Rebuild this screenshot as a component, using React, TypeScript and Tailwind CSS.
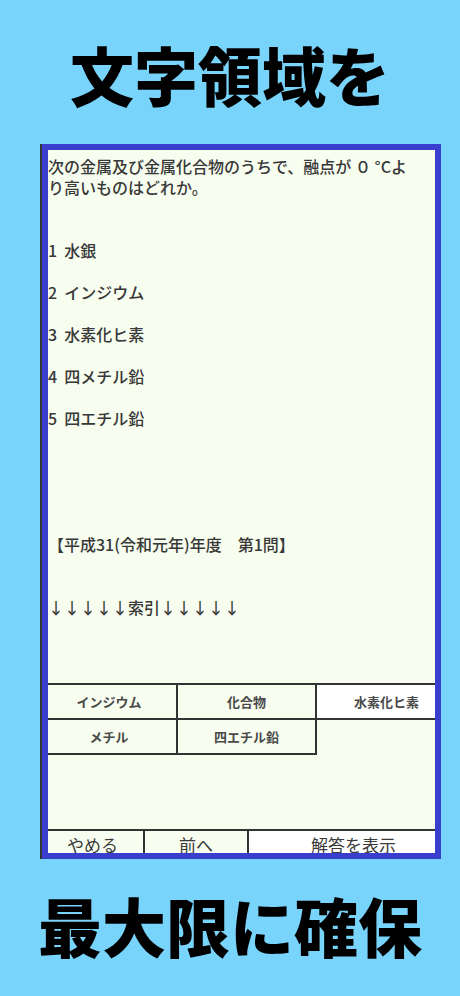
import React from "react";

const jp = { fontFamily: '"Noto Sans CJK JP", "Noto Sans", sans-serif' };

const lines = [
    "次の金属及び金属化合物のうちで、融点が ０ °Cよ",
    "り高いものはどれか。",
    "",
    "",
    "1  水銀",
    "",
    "2  インジウム",
    "",
    "3  水素化ヒ素",
    "",
    "4  四メチル鉛",
    "",
    "5  四エチル鉛",
    "",
    "",
    "",
    "",
    "",
    "【平成31(令和元年)年度　第1問】",
    "",
    "",
    "↓↓↓↓↓索引↓↓↓↓↓",
];

const keywords = ["インジウム", "化合物", "水素化ヒ素", "メチル", "四エチル鉛"];

export default function App() {
    return (
        <div className="w-[460px] h-[996px] bg-[#79d4fc] flex flex-col overflow-hidden" style={jp}>
            {/* Top heading */}
            <div className="h-[144px] flex items-center justify-center pt-[2px]">
                <h1 className="text-[64px] leading-none font-black text-black">文字領域を</h1>
            </div>

            {/* Phone screen */}
            <div className="ml-[40px] w-[401px] h-[715px] border-l-2 border-[#333] relative overflow-hidden">
                <div className="w-[416px] h-full bg-[#f7fdef] flex flex-col">
                    {/* Question */}
                    <p className="pt-[12px] pl-[6px] h-[474px] text-[16px] leading-[21px] text-[#383838] font-medium whitespace-pre">
                        {lines.join("\n")}
                    </p>

                    {/* Keyword buttons */}
                    <div className="mt-[65px] grid grid-cols-[136px_139px_141px] border-t-2 border-[#333]">
                        {keywords.map((k, i) => (
                            <div
                                key={k}
                                className={`h-[35px] flex items-center justify-center border-r-2 border-b-2 border-[#333] text-[13px] font-bold text-[#4a4a4a] ${i === 2 ? 'bg-white' : 'bg-[#f7fdef]'}`}
                            >
                                {k}
                            </div>
                        ))}
                    </div>

                    {/* Bottom bar */}
                    <div className="mt-[74px] flex border-t-2 border-[#333] h-[40px] text-[17px] text-[#3a3a3a]">
                        <div className="w-[103px] flex items-center justify-center border-r-2 border-[#333]">やめる</div>
                        <div className="w-[104px] flex items-center justify-center border-r-2 border-[#333]">前へ</div>
                        <div className="flex-1 flex items-center justify-center bg-white">解答を表示</div>
                    </div>
                </div>

                {/* Highlight frame over the screenshot */}
                <div className="absolute inset-0 border-[6px] border-[#3a3ecf] pointer-events-none"></div>
            </div>

            {/* Bottom heading */}
            <div className="flex-1 flex items-center justify-center pb-[8px]">
                <h2 className="text-[64px] leading-none font-black text-black">最大限に確保</h2>
            </div>
        </div>
    );
}
